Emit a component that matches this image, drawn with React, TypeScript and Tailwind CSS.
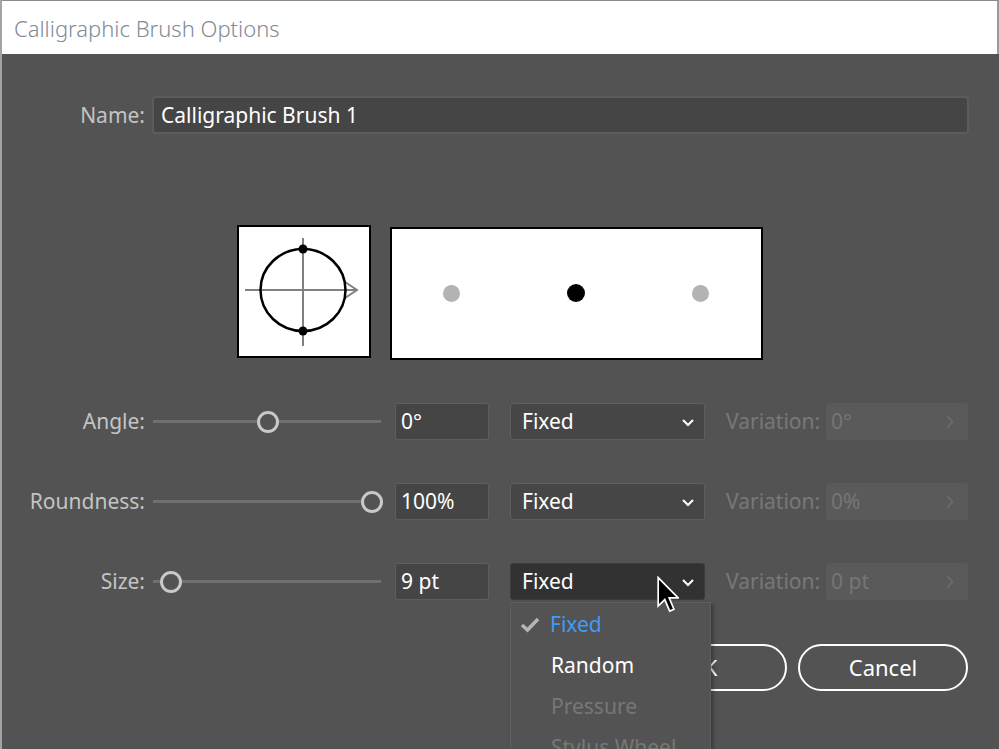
import React from "react";

const font = { fontFamily: '"Noto Sans", "Open Sans", sans-serif' };

function Chevron({ className = "" }: { className?: string }) {
  return (
    <svg width="14" height="9" viewBox="0 0 14 9" className={className}>
      <path d="M2 2 L7 7 L12 2" fill="none" stroke="currentColor" strokeWidth="2" />
    </svg>
  );
}

function Slider({ pos }: { pos: number }) {
  return (
    <div className="relative w-[228px] h-[24px] flex items-center">
      <div className="w-full h-[3px] bg-[#707070]" />
      <div
        className="absolute top-[1px] w-[22px] h-[22px] rounded-full border-[3px] border-[#c9c9c9] bg-[#535353]"
        style={{ left: pos - 11 }}
      />
    </div>
  );
}

function Row({
  label,
  value,
  pos,
  variation,
  active,
}: {
  label: string;
  value: string;
  pos: number;
  variation: string;
  active?: boolean;
}) {
  return (
    <div className="flex items-center h-[37px]">
      <div className="w-[143px] text-right text-[21px] text-[#c4c4c4] pt-[1px]">{label}</div>
      <div className="ml-[8px]">
        <Slider pos={pos} />
      </div>
      <div className="ml-[14px] w-[94px] h-[37px] rounded-[3px] border border-[#5e5e5e] bg-[#454545] flex items-center pl-[5px] pt-[1px] text-[21px] text-white">
        {value}
      </div>
      <div
        className={
          "ml-[21px] w-[195px] h-[37px] rounded-[3px] border flex items-center justify-between pl-[11px] pr-[9px] pt-[1px] text-[21px] text-white " +
          (active ? "bg-[#323232] border-[#3c3c3c]" : "bg-[#464646] border-[#5e5e5e]")
        }
      >
        <span>Fixed</span>
        <Chevron className="text-white" />
      </div>
      <div className="ml-[21px] w-[100px] whitespace-nowrap text-[21px] text-[#787878] pt-[1px]">Variation:</div>
      <div className="w-[142px] h-[37px] rounded-[3px] bg-[#5a5a5a] flex items-center justify-between pl-[5px] pr-[14px] pt-[1px] text-[21px] text-[#767676]">
        <span>{variation}</span>
        <svg width="8" height="14" viewBox="0 0 8 14">
          <path d="M1.5 1.5 L6.5 7 L1.5 12.5" fill="none" stroke="#6e6e6e" strokeWidth="1.6" />
        </svg>
      </div>
    </div>
  );
}

export default function App() {
  return (
    <div
      className="relative w-[999px] h-[749px] overflow-hidden bg-[#535353] border-l-2 border-[#a3a3a3]"
      style={font}
    >
      {/* title bar */}
      <div className="h-[54px] bg-white border-t border-[#8a8a8a] border-r-2 border-r-[#9a9a9a] flex items-center pl-[12px] pt-[2px]">
        <span className="text-[22px] text-[#838a96] font-light">Calligraphic Brush Options</span>
      </div>

      {/* name */}
      <div className="flex items-center mt-[42px]">
        <div className="w-[143px] text-right text-[21px] text-[#c4c4c4] pt-[2px]">Name:</div>
        <div className="ml-[7px] w-[817px] h-[38px] rounded-[4px] border-2 border-[#5c5c5c] bg-[#454545] flex items-center pl-[7px] pt-[2px] text-[21px] text-white">
          Calligraphic Brush 1
        </div>
      </div>

      {/* previews */}
      <div className="flex items-start mt-[91px] ml-[235px]">
        <div className="w-[134px] h-[133px] bg-white border-2 border-black">
          <svg width="130" height="129" viewBox="0 0 130 129">
            <line x1="6" y1="63" x2="118" y2="63" stroke="#808080" strokeWidth="2" />
            <path d="M106 55 L118 63 L106 71" fill="none" stroke="#808080" strokeWidth="2" />
            <line x1="64" y1="11" x2="64" y2="119" stroke="#808080" strokeWidth="2" />
            <ellipse cx="64" cy="63" rx="42.5" ry="41" fill="none" stroke="#000" strokeWidth="2.5" />
            <circle cx="64" cy="22" r="4.5" fill="#000" />
            <circle cx="64" cy="104" r="4.5" fill="#000" />
          </svg>
        </div>
        <div className="ml-[19px] mt-[2px] w-[373px] h-[133px] bg-white border-2 border-black relative">
          <div className="absolute left-[51px] top-[56px] w-[17px] h-[17px] rounded-full bg-[#b3b3b3]" />
          <div className="absolute left-[175px] top-[55px] w-[18px] h-[18px] rounded-full bg-black" />
          <div className="absolute left-[300px] top-[56px] w-[17px] h-[17px] rounded-full bg-[#b3b3b3]" />
        </div>
      </div>

      {/* rows */}
      <div className="flex flex-col gap-[43px] mt-[43px]">
        <Row label="Angle:" value="0°" pos={115} variation="0°" />
        <Row label="Roundness:" value="100%" pos={219} variation="0%" />
        <Row label="Size:" value="9 pt" pos={18} variation="0 pt" active />
      </div>

      {/* buttons */}
      <div className="flex mt-[44px] ml-[615px] gap-[11px]">
        <div className="w-[170px] h-[47px] rounded-full border-2 border-white flex items-center justify-center text-[22px] text-white">
          OK
        </div>
        <div className="w-[170px] h-[47px] rounded-full border-2 border-white flex items-center justify-center text-[22px] text-white">
          Cancel
        </div>
      </div>

      {/* dropdown menu */}
      <div className="absolute left-[508px] top-[602px] w-[201px] h-[160px] bg-[#535353] border border-[#5f5f5f] shadow-[2px_2px_4px_rgba(0,0,0,0.35)] pt-[1px] text-[21px]">
        <div className="h-[41px] flex items-center">
          <svg width="20" height="16" viewBox="0 0 20 16" className="ml-[9px]">
            <path d="M2 8 L7.5 13 L18 2" fill="none" stroke="#b5b5b5" strokeWidth="3.5" />
          </svg>
          <span className="ml-[10px] text-[#3f9cf2]">Fixed</span>
        </div>
        <div className="h-[41px] flex items-center pl-[40px] text-white">Random</div>
        <div className="h-[41px] flex items-center pl-[40px] text-[#777777]">Pressure</div>
        <div className="h-[41px] flex items-center pl-[40px] text-[#777777] whitespace-nowrap">Stylus Wheel</div>
      </div>

      {/* cursor */}
      <svg
        className="absolute left-[655px] top-[576px]"
        width="22"
        height="38"
        viewBox="0 0 13 22"
      >
        <path
          d="M0.7 0.7 L0.7 17.5 L4.6 13.7 L7.5 20.5 L10 19.4 L7.2 12.7 L12.5 12.7 Z"
          fill="#000"
          stroke="#fff"
          strokeWidth="1"
          strokeLinejoin="miter"
        />
      </svg>
    </div>
  );
}
